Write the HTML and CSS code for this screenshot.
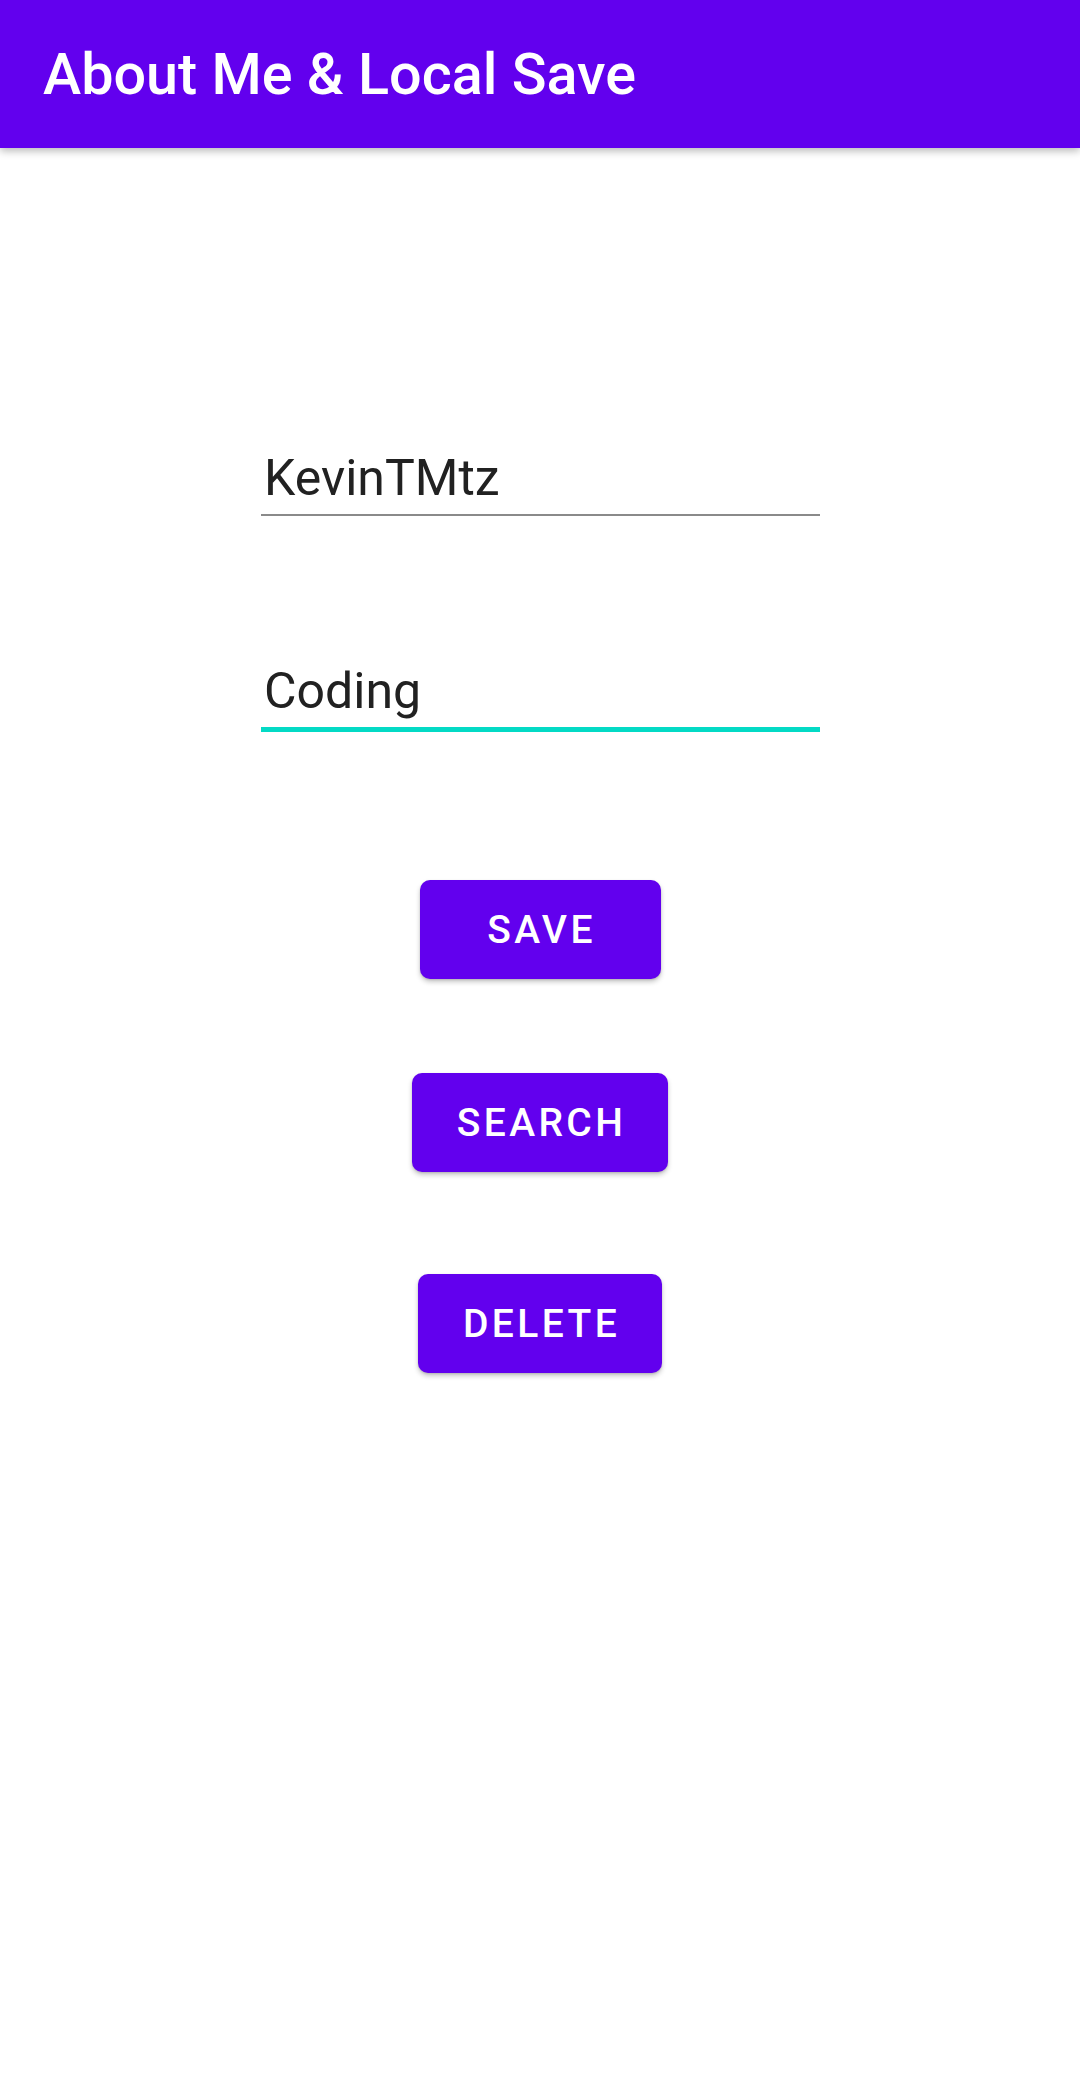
FILE: index.html
```html
<!DOCTYPE html>
<html lang="en">
<head>
<meta charset="utf-8">
<title>About Me &amp; Local Save</title>
<link rel="stylesheet" href="styles.css">
</head>
<body>
<header class="appbar">
  <h1 class="appbar-title">About Me &amp; Local Save</h1>
</header>
<main class="content">
  <div class="field field-name">
    <span class="field-text">KevinTMtz</span>
  </div>
  <div class="field field-hobby field-focused">
    <span class="field-text">Coding</span>
  </div>
  <button class="btn btn-save">Save</button>
  <button class="btn btn-search">Search</button>
  <button class="btn btn-delete">Delete</button>
</main>
</body>
</html>
```

FILE: styles.css
```css
* {
  box-sizing: border-box;
}

html, body {
  margin: 0;
  padding: 0;
  background: #ffffff;
}

body {
  width: 1080px;
  height: 2076px;
  font-family: Roboto, "Noto Sans", "Liberation Sans", sans-serif;
  overflow: hidden;
}

.appbar {
  height: 148px;
  background: #6200ee;
  display: flex;
  align-items: center;
  padding: 0 0 0 43px;
  box-shadow: 0 3px 8px rgba(0, 0, 0, 0.28);
  position: relative;
  z-index: 1;
}

.appbar-title {
  margin: 0;
  color: #ffffff;
  font-size: 57.5px;
  font-weight: 500;
  line-height: 1;
  padding-top: 2px;
}

.content {
  display: flex;
  flex-direction: column;
  align-items: center;
}

.field {
  width: 559px;
  margin-left: 1px;
  padding: 0 0 7px 3px;
  border-bottom: 2px solid #8a8a8a;
}

.field-text {
  display: block;
  font-size: 50px;
  line-height: 57px;
  color: #212121;
}

.field-name {
  margin-top: 302px;
}

.field-hobby {
  margin-top: 147px;
}

.field-focused {
  border-bottom: 5px solid #03dac5;
}

.btn {
  height: 99px;
  min-width: 241px;
  padding: 0 42px 0 45px;
  border: none;
  border-radius: 10px;
  background: #6200ee;
  color: #ffffff;
  font-family: Roboto, "Noto Sans", "Liberation Sans", sans-serif;
  font-size: 39px;
  font-weight: 500;
  letter-spacing: 3.4px;
  text-transform: uppercase;
  box-shadow: 0 3px 5px rgba(0, 0, 0, 0.22), 0 1px 2px rgba(0, 0, 0, 0.12);
}

.btn-save {
  margin-top: 148px;
}

.btn-search {
  margin-top: 94px;
}

.btn-delete {
  margin-top: 102px;
}
```
